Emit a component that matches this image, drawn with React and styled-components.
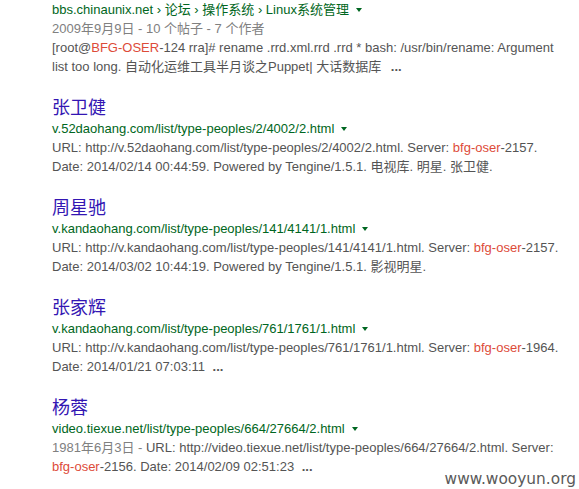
import React from "react";
import styled, { createGlobalStyle } from "styled-components";

const Global = createGlobalStyle`
  html, body { margin: 0; padding: 0; background: #fff; }
  body { font-family: "Liberation Sans", Arial, "Noto Sans CJK SC", sans-serif; }
`;

const Page = styled.div`
  position: relative;
  width: 579px;
  height: 489px;
  overflow: hidden;
  padding-left: 52px;
  box-sizing: border-box;
`;

const Results = styled.ol`
  list-style: none;
  margin: 0;
  padding: 0;
  display: flex;
  flex-direction: column;
  gap: 21px;
`;

const Result = styled.li`
  display: flex;
  flex-direction: column;
`;

const Title = styled.a`
  font-family: "Liberation Sans", Arial, "Noto Sans CJK SC", sans-serif;
  font-size: 18px;
  line-height: 22px;
  color: #3316b3;
  text-decoration: none;
  white-space: nowrap;
`;

const Cite = styled.div`
  font-size: 13px;
  line-height: 19px;
  color: #006621;
  white-space: nowrap;
  display: flex;
  align-items: center;
`;

const Arrow = styled.span`
  display: inline-block;
  width: 0;
  height: 0;
  margin-left: 7px;
  margin-top: 1px;
  border-left: 3.5px solid transparent;
  border-right: 3.5px solid transparent;
  border-top: 4px solid #006621;
`;

const Line = styled.div`
  font-size: 13px;
  line-height: 19px;
  color: ${(p) => (p.$muted ? "#808080" : "#545454")};
  white-space: nowrap;
`;

const Muted = styled.span`
  color: #808080;
`;

const Hit = styled.span`
  color: #dd4b39;
`;

const More = styled.b`
  margin-left: ${(p) => p.$gap || 4}px;
  color: #545454;
`;

const Watermark = styled.div`
  position: absolute;
  right: 3px;
  bottom: 1px;
  font-family: "DejaVu Sans", Verdana, sans-serif;
  font-size: 15.4px;
  line-height: 18px;
  color: #5a5a5a;
`;

export default function App() {
  return (
    <>
      <Global />
      <Page>
        <Results>
          <Result>
            <Cite>
              bbs.chinaunix.net › 论坛 › 操作系统 › Linux系统管理
              <Arrow />
            </Cite>
            <Line $muted>2009年9月9日 - 10 个帖子 - 7 个作者</Line>
            <Line>
              [root@<Hit>BFG-OSER</Hit>-124 rra]# rename .rrd.xml.rrd .rrd * bash: /usr/bin/rename: Argument
            </Line>
            <Line>
              list too long. 自动化运维工具半月谈之Puppet| 大话数据库 <More $gap={6}>...</More>
            </Line>
          </Result>

          <Result>
            <Title>张卫健</Title>
            <Cite>
              v.52daohang.com/list/type-peoples/2/4002/2.html
              <Arrow />
            </Cite>
            <Line>
              URL: http://v.52daohang.com/list/type-peoples/2/4002/2.html. Server: <Hit>bfg-oser</Hit>-2157.
            </Line>
            <Line>Date: 2014/02/14 00:44:59. Powered by Tengine/1.5.1. 电视库. 明星. 张卫健.</Line>
          </Result>

          <Result>
            <Title>周星驰</Title>
            <Cite>
              v.kandaohang.com/list/type-peoples/141/4141/1.html
              <Arrow />
            </Cite>
            <Line>
              URL: http://v.kandaohang.com/list/type-peoples/141/4141/1.html. Server: <Hit>bfg-oser</Hit>-2157.
            </Line>
            <Line>Date: 2014/03/02 10:44:19. Powered by Tengine/1.5.1. 影视明星.</Line>
          </Result>

          <Result>
            <Title>张家辉</Title>
            <Cite>
              v.kandaohang.com/list/type-peoples/761/1761/1.html
              <Arrow />
            </Cite>
            <Line>
              URL: http://v.kandaohang.com/list/type-peoples/761/1761/1.html. Server: <Hit>bfg-oser</Hit>-1964.
            </Line>
            <Line>
              Date: 2014/01/21 07:03:11 <More>...</More>
            </Line>
          </Result>

          <Result>
            <Title>杨蓉</Title>
            <Cite>
              video.tiexue.net/list/type-peoples/664/27664/2.html
              <Arrow />
            </Cite>
            <Line>
              <Muted>1981年6月3日 - </Muted>URL: http://video.tiexue.net/list/type-peoples/664/27664/2.html. Server:
            </Line>
            <Line>
              <Hit>bfg-oser</Hit>-2156. Date: 2014/02/09 02:51:23 <More>...</More>
            </Line>
          </Result>
        </Results>
        <Watermark>www.wooyun.org</Watermark>
      </Page>
    </>
  );
}
